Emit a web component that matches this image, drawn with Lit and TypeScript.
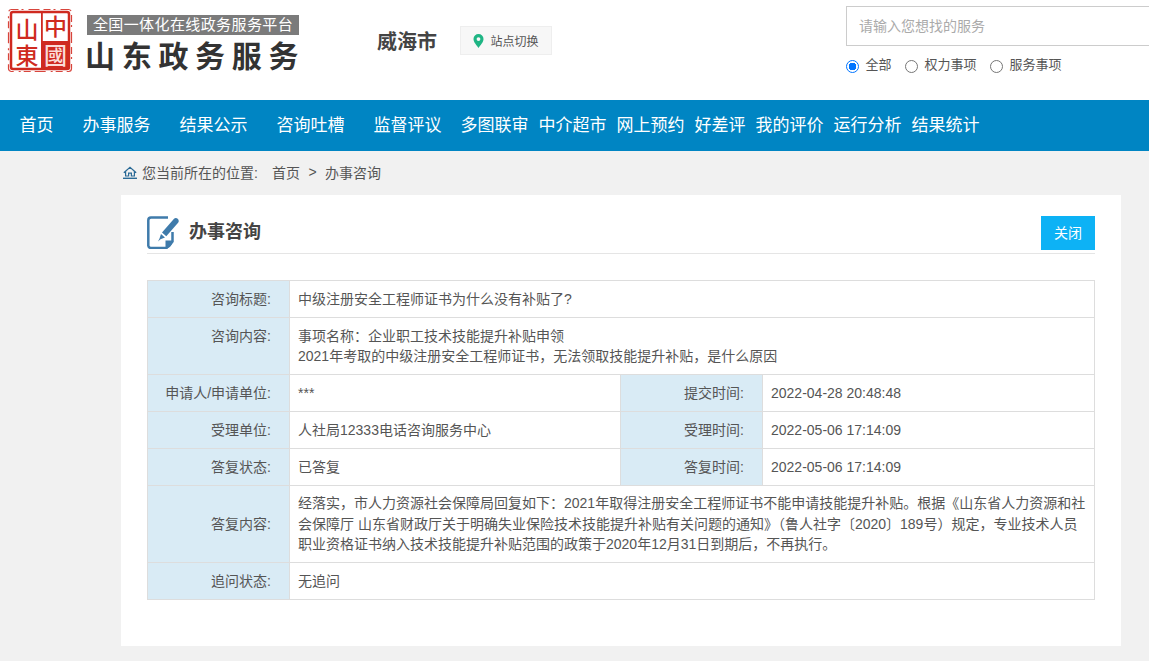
import { LitElement, html, css, svg } from "lit";
import { customElement } from "lit/decorators.js";

const NAV: [string, string][] = [
  ["首页", "a"], ["办事服务", "a"], ["结果公示", "a"], ["咨询吐槽", "a"], ["监督评议", "b"],
  ["多图联审", "c"], ["中介超市", "c"], ["网上预约", "c"], ["好差评", "c"], ["我的评价", "c"], ["运行分析", "c"], ["结果统计", "c"],
];

const seal = svg`<svg width="70" height="70" viewBox="5 5 70 70">
  <rect x="8.500" y="9.500" width="63" height="62" rx="3" fill="none" stroke="#d8453c" stroke-width="1.200" stroke-dasharray="7 3 2 5 11 4"/>
  <rect x="11" y="12" width="58" height="57" rx="2" fill="#fff" stroke="#cf2a20" stroke-width="2.500"/>
  <rect x="41" y="13" width="1.800" height="55" fill="#cf2a20"/>
  <rect x="42" y="41" width="27" height="28" fill="#cf2a20"/>
  <g font-family="'Noto Sans CJK TC','Noto Sans CJK SC',sans-serif" font-size="23" font-weight="500" writing-mode="vertical-rl" letter-spacing="3">
    <text x="27" y="18" fill="#cf2a20">山東</text>
    <text x="55.500" y="15" fill="#cf2a20">中<tspan fill="#fbdcd8" dy="3">國</tspan></text>
  </g>
</svg>`;

@customElement("app-root")
export class AppRoot extends LitElement {
  static styles = css`
    :host { display: block; min-height: 661px; background: #f1f1f1; font-family: "Liberation Sans", "Noto Sans CJK SC", sans-serif; color: #555; font-size: 14px; overflow: hidden; }
    .top { height: 100px; background: #fff; display: flex; position: relative; box-sizing: border-box; }
    .logo { margin: 5px 0 0 5px; width: 70px; height: 70px; }
    .brand { margin: 15px 0 0 12px; width: 212px; }
    .slogan { background: #7b7b7b; color: #fff; font-size: 15px; height: 20px; line-height: 19px; text-align: center; white-space: nowrap; letter-spacing: 0.4px; }
    .bname { font-size: 30px; font-weight: 700; color: #333; letter-spacing: 6.7px; line-height: 36px; margin: 4px 0 0 -2px; white-space: nowrap; }
    .city { margin: 28px 0 0 78px; font-size: 20px; font-weight: 700; color: #444; line-height: 28px; width: 61px; white-space: nowrap; }
    .switch { margin: 26px 0 0 22px; width: 92px; height: 29px; box-sizing: border-box; background: #f7f7f7; border: 1px solid #eee; display: flex; align-items: center; justify-content: center; gap: 6px; font-size: 12px; color: #555; white-space: nowrap; }
    .search { margin: 6px 0 0 294px; flex: 1; min-width: 0; }
    .input { height: 38px; border: 1px solid #ccc; border-right: none; line-height: 38px; padding-left: 12px; color: #aaa; font-size: 14px; }
    .radios { display: flex; align-items: center; margin-top: 9px; font-size: 13px; color: #555; height: 20px; }
    .radio { width: 13px; height: 13px; box-sizing: border-box; border: 1px solid #767676; border-radius: 50%; margin-right: 6.500px; flex: none; position: relative; top: 1px; }
    .radio.on { border: 1px solid #0075ff; background: radial-gradient(circle, #0075ff 0 3.600px, #fff 4px); }
    .rl { margin-right: 13.500px; padding-bottom: 4px; }
    .rl.w { margin-right: 13.500px; }
    nav { height: 51px; box-sizing: border-box; padding: 0 0 4px 5.100px; background: #0085c3; display: flex; align-items: center; color: #fff; font-size: 17px; white-space: nowrap; }
    nav span.a { padding: 0 14.500px; }
    nav span.b { padding: 0 14px 0 14.500px; }
    nav span.c { padding: 0 5px; }
    .crumb { height: 44px; box-sizing: border-box; padding: 0 0 2px 123px; display: flex; align-items: center; font-size: 14px; color: #555; white-space: nowrap; }
    .crumb svg { margin-right: 5px; }
    .sep1 { margin-left: 14px; }
    .sep { margin: 0 8.500px; }
    .card { margin: 0 28px 0 121px; background: #fff; height: 451px; padding: 21px 26px 0; box-sizing: border-box; }
    .head { height: 37px; border-bottom: 1px solid #e5e5e5; display: flex; align-items: flex-start; }
    .head h2 { margin: 5px 0 0 10px; font-size: 18px; line-height: 22px; font-weight: 700; color: #444; flex: 1; }
    .icon { width: 32px; height: 33px; flex: none; }
    .close { width: 54px; height: 34px; box-sizing: border-box; padding-bottom: 3px; background: #0db2f5; color: #fff; font-size: 14px; display: flex; align-items: center; justify-content: center; }
    table { border-collapse: collapse; table-layout: fixed; width: 947px; margin-top: 26px; font-size: 14px; color: #555; }
    td { border: 1px solid #ddd; padding: 0 8px; line-height: 20px; height: 37px; box-sizing: border-box; }
    td.l { background: #d9ebf5; text-align: right; padding: 0 18px 0 0; }
    tr.two td { height: 57px; padding-top: 8px; vertical-align: top; }
    tr.long td { height: 77px; line-height: 20.500px; }
  `;

  render() {
    return html`
      <div class="top">
        <div class="logo">${seal}</div>
        <div class="brand">
          <div class="slogan">全国一体化在线政务服务平台</div>
          <div class="bname">山东政务服务</div>
        </div>
        <div class="city">威海市</div>
        <div class="switch">
          <svg width="11" height="14" viewBox="0 0 11 14"><path fill="#1fb584" fill-rule="evenodd" d="M5.500 0a5 5 0 0 1 5 5c0 3.200-3.400 6.800-5 9-1.600-2.200-5-5.800-5-9a5 5 0 0 1 5-5zm0 3.200a1.900 1.900 0 1 0 0 3.800 1.900 1.900 0 0 0 0-3.800z"/></svg>
          <span>站点切换</span>
        </div>
        <div class="search">
          <div class="input">请输入您想找的服务</div>
          <div class="radios">
            <span class="radio on"></span><span class="rl">全部</span>
            <span class="radio"></span><span class="rl w">权力事项</span>
            <span class="radio"></span><span class="rl">服务事项</span>
          </div>
        </div>
      </div>
      <nav>${NAV.map(([t, c]) => html`<span class=${c}>${t}</span>`)}</nav>
      <div class="crumb">
        <svg width="14" height="13" viewBox="0 0 14 13" fill="none" stroke="#2a6a96" stroke-width="1.200"><path d="M.8 6.800 7 1.200l6.200 5.600M2.600 5.600V10h3V7.200h2.800V10h3V5.600"/><path d="M0 12.300h14" stroke-width="1.400"/></svg>
        <span>您当前所在的位置:</span><span class="sep1">首页</span><span class="sep">&gt;</span><span>办事咨询</span>
      </div>
      <div class="card">
        <div class="head">
          <svg class="icon" viewBox="0 0 32 33">
            <path d="M21 1.500H4A2.800 2.800 0 0 0 1.300 4.300v25.500A2.800 2.800 0 0 0 4 32h15.500l6-6.500V16" fill="none" stroke="#3f7bab" stroke-width="2.500"/>
            <path d="M18.500 32.500v-8h7.500c0 3.500-3 8-7.500 8z" fill="#3f7bab"/>
            <path d="M15 16.500 26.800 3c1-1.100 2.700-1.200 3.900-.2s1.400 2.700.4 3.900L19.300 20.300z" fill="#3f7bab"/>
            <path d="M14 18l4 3.500-4.500 1.800L11 25.500l1.500-3z" fill="#3f7bab"/>
          </svg>
          <h2>办事咨询</h2>
          <div class="close">关闭</div>
        </div>
        <table>
          <colgroup><col style="width:142px"/><col style="width:331px"/><col style="width:142px"/><col style="width:332px"/></colgroup>
          <tbody>
            <tr><td class="l">咨询标题:</td><td colspan="3">中级注册安全工程师证书为什么没有补贴了?</td></tr>
            <tr class="two"><td class="l">咨询内容:</td><td colspan="3">事项名称&#xFF1A;企业职工技术技能提升补贴申领<br/>2021年考取的中级注册安全工程师证书&#xFF0C;无法领取技能提升补贴&#xFF0C;是什么原因</td></tr>
            <tr><td class="l">申请人/申请单位:</td><td>***</td><td class="l">提交时间:</td><td>2022-04-28 20:48:48</td></tr>
            <tr><td class="l">受理单位:</td><td>人社局12333电话咨询服务中心</td><td class="l">受理时间:</td><td>2022-05-06 17:14:09</td></tr>
            <tr><td class="l">答复状态:</td><td>已答复</td><td class="l">答复时间:</td><td>2022-05-06 17:14:09</td></tr>
            <tr class="long"><td class="l">答复内容:</td><td colspan="3">经落实&#xFF0C;市人力资源社会保障局回复如下&#xFF1A;2021年取得注册安全工程师证书不能申请技能提升补贴。根据《山东省人力资源和社会保障厅 山东省财政厅关于明确失业保险技术技能提升补贴有关问题的通知》&#xFF08;鲁人社字〔2020〕189号&#xFF09;规定&#xFF0C;专业技术人员职业资格证书纳入技术技能提升补贴范围的政策于2020年12月31日到期后&#xFF0C;不再执行。</td></tr>
            <tr><td class="l">追问状态:</td><td colspan="3">无追问</td></tr>
          </tbody>
        </table>
      </div>`;
  }
}
